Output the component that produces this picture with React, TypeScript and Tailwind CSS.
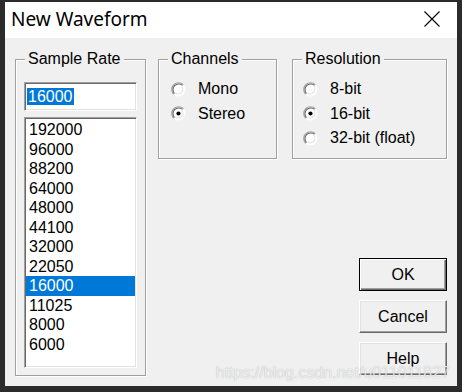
const rates = ["192000", "96000", "88200", "64000", "48000", "44100", "32000", "22050", "16000", "11025", "8000", "6000"];

function Radio({ checked }: { checked?: boolean }) {
  return (
    <svg width="15" height="15" viewBox="0 0 13 13" className="shrink-0">
      <circle cx="6.5" cy="6.5" r="6" fill="#fff" />
      {/* top-left sunken arcs */}
      <path d="M2.26 10.74 A6 6 0 0 1 10.74 2.26" fill="none" stroke="#a0a0a0" strokeWidth="1" />
      <path d="M2.97 10.03 A5 5 0 0 1 10.03 2.97" fill="none" stroke="#696969" strokeWidth="1" />
      <path d="M3.68 9.32 A4 4 0 0 0 9.32 3.68" fill="none" stroke="#e3e3e3" strokeWidth="1" />
      {checked && <circle cx="6.5" cy="6.5" r="1.8" fill="#000" />}
    </svg>
  );
}

function Group({ title, className, children }: { title: string; className: string; children: React.ReactNode }) {
  return (
    <fieldset
      className={
        "border border-[#a0a0a0] shadow-[inset_1px_1px_0_#fff,1px_1px_0_#fff] " + className
      }
    >
      <legend className="ml-[9px] px-[3px] leading-[18px] bg-[#f0f0f0]">{title}</legend>
      {children}
    </fieldset>
  );
}

function Option({ label, checked, indent }: { label: string; checked?: boolean; indent: string }) {
  return (
    <div className={"flex items-center h-[24.5px] gap-[12px] " + indent}>
      <Radio checked={checked} />
      <span className="leading-[18px]">{label}</span>
    </div>
  );
}

function Button({ label, primary }: { label: string; primary?: boolean }) {
  return (
    <button
      className={
        "w-[88px] h-[33px] bg-[#f0f0f0] text-[16px] leading-none flex items-center justify-center " +
        (primary
          ? "border border-black shadow-[inset_1px_1px_0_#fff,inset_-1px_-1px_0_#696969,inset_-2px_-2px_0_#a0a0a0]"
          : "border border-t-white border-l-white border-b-[#696969] border-r-[#696969] shadow-[inset_-1px_-1px_0_#a0a0a0,inset_1px_1px_0_#e3e3e3]")
      }
    >
      {label}
    </button>
  );
}

export default function App() {
  return (
    <div className="relative w-[462px] h-[392px] bg-[#2b2b2b] pt-[2px] px-[5px] pb-[6px] text-black font-['Liberation_Sans',Arial,sans-serif] text-[16px]">
      <div className="flex flex-col h-full">
        <div className="h-[36px] bg-white flex items-center justify-between pl-[6px] pr-[17px]">
          <span className="font-['Noto_Sans',sans-serif] text-[19px] leading-none -mt-[1px]">New Waveform</span>
          <svg width="16" height="16" viewBox="0 0 16 16" className="-mt-[2px]">
            <path d="M0.5 0.5 L15.5 15.5 M15.5 0.5 L0.5 15.5" stroke="#000" strokeWidth="1.1" />
          </svg>
        </div>

        <div className="flex-1 bg-[#f0f0f0] flex pl-[10px] pr-[10px] pt-[12px]">
          <Group title="Sample Rate" className="w-[131px] h-[326px] shrink-0">
            <div className="ml-[8px] mt-[14px] w-[113px] h-[29px] bg-white border border-t-[#a0a0a0] border-l-[#a0a0a0] border-b-white border-r-white shadow-[inset_1px_1px_0_#696969,inset_-1px_-1px_0_#e3e3e3] flex items-center pl-[2px]">
              <span className="bg-[#0078d7] text-white leading-[17px] px-[1px]">16000</span>
            </div>
            <div className="ml-[8px] mt-[6px] w-[113px] h-[251px] bg-white border border-t-[#a0a0a0] border-l-[#a0a0a0] border-b-white border-r-white shadow-[inset_1px_1px_0_#696969,inset_-1px_-1px_0_#e3e3e3] pt-[2px] px-[1px]">
              {rates.map((r, i) => (
                <div
                  key={r}
                  className={
                    "h-[19.5px] leading-[19.5px] pl-[3px] " +
                    (i === 8 ? "bg-[#0078d7] text-white" : "")
                  }
                >
                  {r}
                </div>
              ))}
            </div>
          </Group>

          <div className="flex-1 flex flex-col ml-[12px]">
            <div className="flex gap-[15px]">
              <Group title="Channels" className="w-[119px] h-[109px]">
                <div className="mt-[9px]">
                  <Option label="Mono" indent="ml-[12px]" />
                  <Option label="Stereo" checked indent="ml-[12px]" />
                </div>
              </Group>
              <Group title="Resolution" className="w-[155px] h-[109px]">
                <div className="mt-[9px]">
                  <Option label="8-bit" indent="ml-[10px]" />
                  <Option label="16-bit" checked indent="ml-[10px]" />
                  <Option label="32-bit (float)" indent="ml-[10px]" />
                </div>
              </Group>
            </div>
            <div className="self-end flex flex-col gap-[9px] mt-[99px]">
              <Button label="OK" primary />
              <Button label="Cancel" />
              <Button label="Help" />
            </div>
          </div>
        </div>
      </div>
      <span className="absolute right-[12px] top-[365px] text-[16px] leading-none text-white/80 [text-shadow:0_0_1px_rgba(0,0,0,0.35)]">
        https://blog.csdn.net/u011011827
      </span>
    </div>
  );
}
